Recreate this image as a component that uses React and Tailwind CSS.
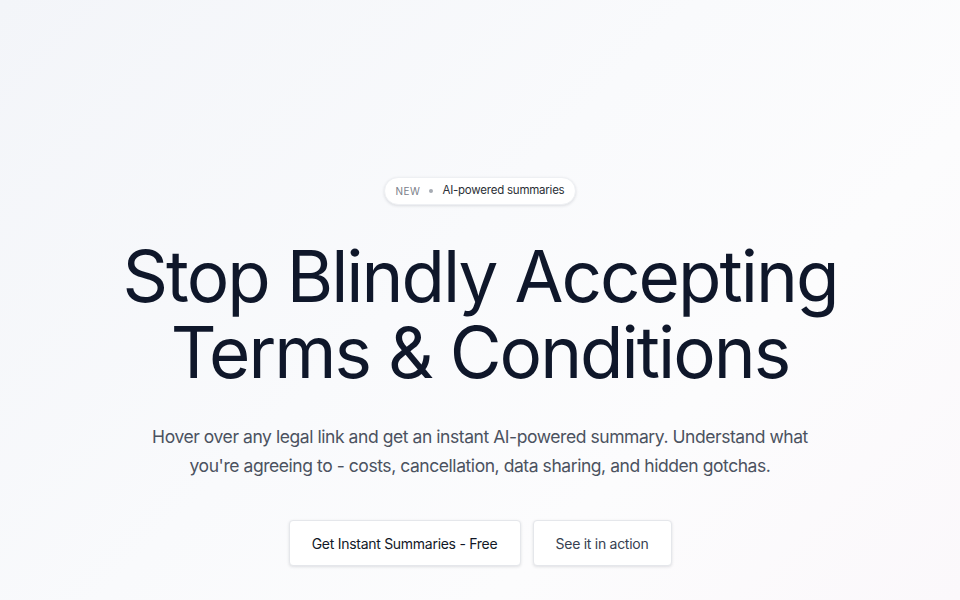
export default function App() {
  return (
    <div
      className="w-full h-[600px] overflow-hidden bg-[linear-gradient(135deg,#f3f5f9_0%,#f9fafc_45%,#fcfcfd_70%,#fbf8fb_100%)]"
      style={{ fontFamily: 'Inter, "Noto Sans", sans-serif' }}
    >
      <div className="flex flex-col items-center pt-[177px]">
        <div className="flex items-center gap-[9px] h-[28px] px-[11px] rounded-full bg-white shadow-[0_1px_3px_rgba(15,23,42,0.12)] border border-[#eef0f3]">
          <span className="text-[10px] tracking-[0.05em] text-[#7b8089]">NEW</span>
          <span className="w-[4px] h-[4px] rounded-full bg-[#a6abb3]" />
          <span className="text-[11.5px] text-[#2b2f36] tracking-[-0.02em]">AI-powered summaries</span>
        </div>
        <h1 className="mt-[33px] text-center text-[71px] font-normal tracking-[-0.028em] text-[#0f172a]">
          <span className="block h-[76px] leading-[76px]">Stop Blindly Accepting</span>
          <span className="block h-[76px] leading-[76px]">Terms &amp; Conditions</span>
        </h1>
        <p className="mt-[32px] text-center text-[17.5px] leading-[29px] text-[#4b5260] tracking-[-0.025em]">
          Hover over any legal link and get an instant AI-powered summary. Understand what
          <br />
          you're agreeing to - costs, cancellation, data sharing, and hidden gotchas.
        </p>
        <div className="mt-[40px] flex gap-[12px]">
          <button className="h-[46px] w-[232px] rounded-[4px] bg-white border border-[#e5e7eb] shadow-[0_1px_3px_rgba(15,23,42,0.12)] text-[14px] text-[#111827] tracking-[-0.02em]">
            Get Instant Summaries - Free
          </button>
          <button className="h-[46px] w-[139px] rounded-[4px] bg-white border border-[#e5e7eb] shadow-[0_1px_3px_rgba(15,23,42,0.12)] text-[14px] text-[#374151] tracking-[-0.02em]">
            See it in action
          </button>
        </div>
      </div>
    </div>
  );
}
